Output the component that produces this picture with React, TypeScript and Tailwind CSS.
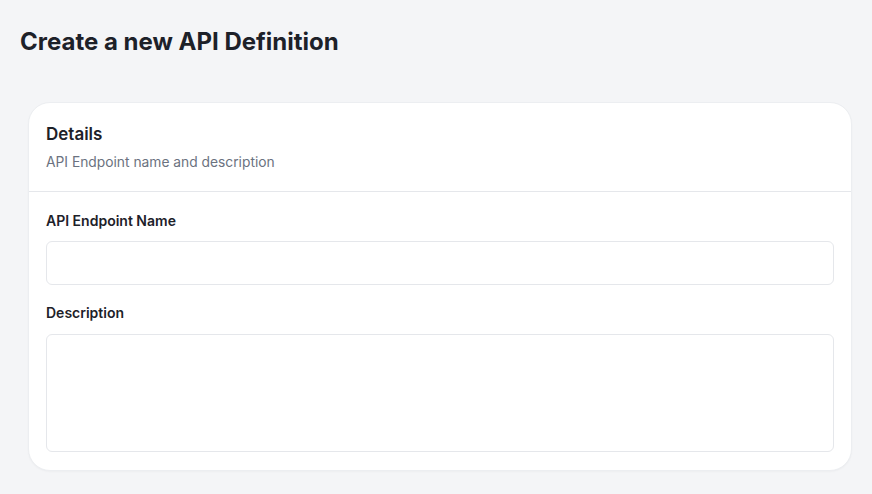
export default function App() {
  return (
    <div
      className="min-h-[494px] bg-[#f4f5f7] px-5 pt-7 pb-6 text-[#1d2129]"
      style={{ fontFamily: 'Inter, "Noto Sans", sans-serif' }}
    >
      <h1 className="text-[24px] leading-7 font-bold">Create a new API Definition</h1>

      {/* Card */}
      <div className="mt-[46px] ml-2 rounded-[22px] bg-white border border-[#eceef1] shadow-[0_1px_2px_rgba(0,0,0,0.03)]">
        <div className="px-[17px] pt-[19px] pb-[19px] border-b border-[#e5e7eb]">
          <h2 className="text-[17px] leading-6 font-semibold">Details</h2>
          <p className="mt-[6px] text-[13.8px] leading-5 text-[#6b7280]">API Endpoint name and description</p>
        </div>

        <div className="px-[17px] pt-[19px] pb-[18px]">
          <label className="block text-[14px] leading-5 font-semibold">API Endpoint Name</label>
          <input
            type="text"
            className="mt-[10px] block w-full h-[44px] rounded-md border border-[#e5e7eb] bg-white px-3 text-sm outline-none"
          />

          <label className="mt-[18px] block text-[14px] leading-5 font-semibold">Description</label>
          <textarea
            className="mt-[11px] block w-full h-[118px] rounded-md border border-[#e5e7eb] bg-white px-3 py-2 text-sm outline-none resize-none"
          />
        </div>
      </div>
    </div>
  )
}
